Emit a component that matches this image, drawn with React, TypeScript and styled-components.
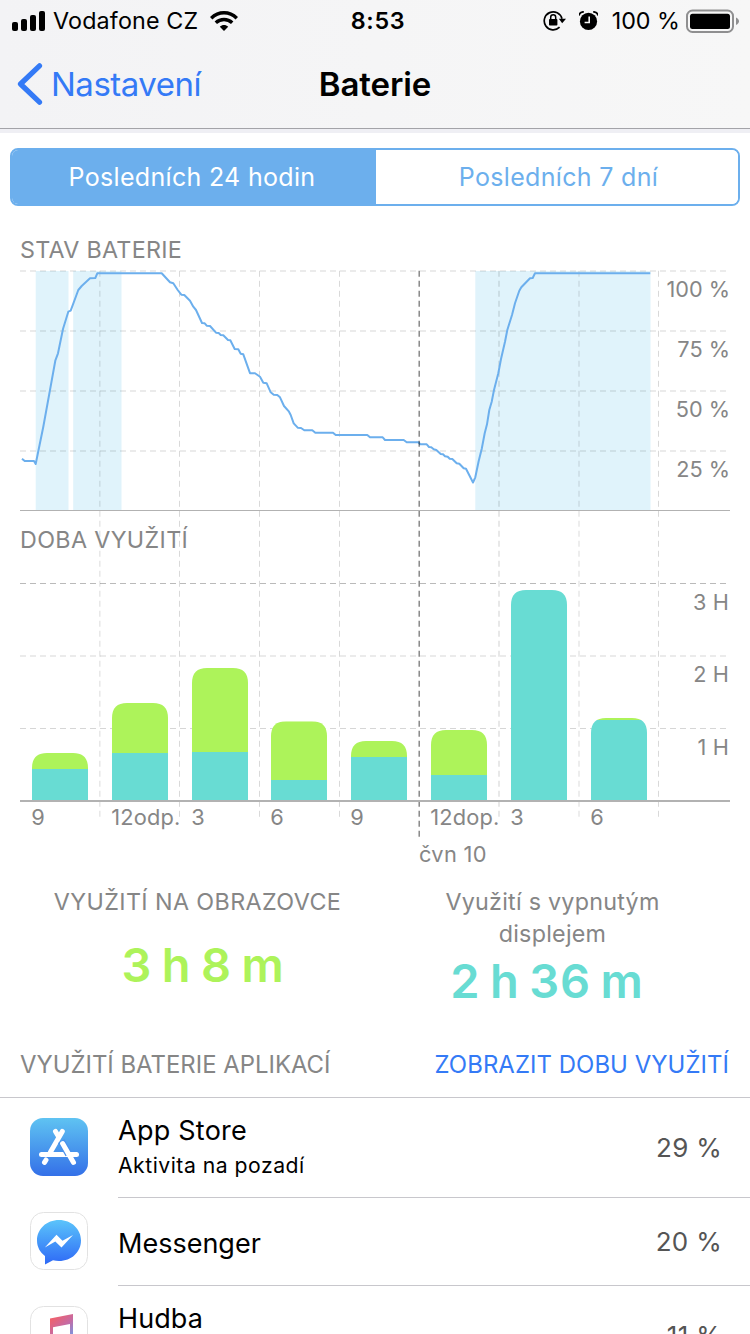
import React from 'react';
import styled, { createGlobalStyle } from 'styled-components';

const GlobalStyle = createGlobalStyle`
  *, *::before, *::after { box-sizing: border-box; }
  html, body { margin: 0; padding: 0; background: #fff; }
  body { font-family: Inter, 'Liberation Sans', sans-serif; color: #000; }
`;

const blue = '#347af6';
const sky = '#6cafed';
const gray = '#868686';
const green = '#adf35a';
const teal = '#68dcd3';

const Screen = styled.div`
  width: 750px;
  height: 1334px;
  overflow: hidden;
  background: #fff;
`;

const Header = styled.header`
  height: 129px;
  background: linear-gradient(90deg, #f3f3f5, #f7f7f7);
  border-bottom: 1px solid #a3a3a8;
`;

const HeaderShade = styled.div`
  height: 4px;
  background: #efeff4;
`;

const StatusBar = styled.div`
  display: grid;
  grid-template-columns: 1fr auto 1fr;
  align-items: center;
  height: 40px;
  padding: 0 11px 0 12px;
`;

const StatusGroup = styled.div<{ $end?: boolean }>`
  display: flex;
  align-items: center;
  justify-content: ${(p) => (p.$end ? 'flex-end' : 'flex-start')};
  height: 40px;
`;

const StatusText = styled.span<{ $track?: number; $margin?: string }>`
  margin: ${(p) => p.$margin ?? '0'};
  padding-top: 1px;
  font-size: 23.3px;
  line-height: 40px;
  letter-spacing: ${(p) => p.$track ?? 0}px;
  white-space: nowrap;
`;

const Clock = styled(StatusText)`
  font-weight: 600;
  padding-left: 5px;
`;

const StatusIcon = styled.svg<{ $gap?: number }>`
  flex: none;
  margin-right: ${(p) => p.$gap ?? 0}px;
`;

const NavBar = styled.nav`
  display: grid;
  grid-template-columns: 1fr auto 1fr;
  align-items: center;
  height: 88px;
  padding: 0 17px;
`;

const BackButton = styled.button`
  display: flex;
  align-items: center;
  gap: 8px;
  border: 0;
  padding: 0;
  background: none;
  color: ${blue};
  font: 400 33px/40px Inter, sans-serif;
  letter-spacing: -0.5px;
`;

const NavTitle = styled.h1`
  margin: 0;
  font-size: 33px;
  line-height: 40px;
  font-weight: 600;
  letter-spacing: -0.1px;
`;

const Segmented = styled.div`
  display: flex;
  height: 58px;
  margin: 15px 10px 0;
  border: 2px solid ${sky};
  border-radius: 8px;
  overflow: hidden;
`;

const Segment = styled.button<{ $active?: boolean }>`
  flex: ${(p) => (p.$active ? '0 0 364px' : '1')};
  border: 0;
  padding: ${(p) => (p.$active ? '0 4px 0 0' : '0 0 0 3px')};
  background: ${(p) => (p.$active ? sky : '#fff')};
  color: ${(p) => (p.$active ? '#fff' : sky)};
  font: 400 25px/54px Inter, sans-serif;
  letter-spacing: 0.32px;
`;

const SectionTitle = styled.h2`
  margin: 29px 0 0;
  padding-left: 20px;
  height: 35px;
  font-size: 23.3px;
  line-height: 30px;
  font-weight: 400;
  color: ${gray};
  letter-spacing: 0.27px;
`;

const Chart = styled.svg`
  display: block;
  text {
    font-family: Inter, sans-serif;
    fill: ${gray};
  }
`;

const Summary = styled.section`
  display: grid;
  grid-template-columns: 355px 355px;
  padding: 16px 0 0 20px;
  height: 162px;
  text-align: center;
`;

const SummaryLabel = styled.div<{ $track: number }>`
  font-size: 23.3px;
  line-height: 32px;
  color: ${gray};
  letter-spacing: ${(p) => p.$track}px;
`;

const SummaryValue = styled.div<{ $color: string; $gap: number; $shift: number }>`
  margin-top: ${(p) => p.$gap}px;
  padding-left: ${(p) => Math.max(p.$shift, 0)}px;
  padding-right: ${(p) => Math.max(-p.$shift, 0)}px;
  font-size: 47px;
  line-height: 56px;
  font-weight: 600;
  letter-spacing: 0.8px;
  word-spacing: -3px;
  color: ${(p) => p.$color};
`;

const ListHeader = styled.div`
  display: flex;
  justify-content: space-between;
  align-items: center;
  height: 66px;
  padding: 0 21px 0 20px;
  border-bottom: 1px solid #c8c7cc;
  font-size: 23.9px;
  line-height: 30px;
  color: ${gray};
`;

const ListLink = styled.a`
  color: ${blue};
  letter-spacing: 0.07px;
`;

const Row = styled.div<{ $height: number }>`
  display: flex;
  height: ${(p) => p.$height}px;
  padding-left: 30px;
`;

const AppIcon = styled.svg<{ $top: number }>`
  flex: none;
  width: 58px;
  height: 58px;
  margin: ${(p) => p.$top}px 30px 0 0;
`;

const RowBody = styled.div`
  flex: 1;
  display: flex;
  justify-content: space-between;
  border-bottom: 1px solid #c8c7cc;
  padding-right: 28px;
`;

const AppName = styled.div<{ $top: number; $track?: number }>`
  padding-top: ${(p) => p.$top}px;
  font-size: 27px;
  line-height: 36px;
  letter-spacing: ${(p) => p.$track ?? 0}px;
`;

const AppNote = styled.div`
  font-size: 21.2px;
  line-height: 32px;
  letter-spacing: 0.5px;
`;

const Percent = styled.div<{ $top: number }>`
  padding-top: ${(p) => p.$top}px;
  font-size: 26px;
  line-height: 36px;
  letter-spacing: 0.3px;
  color: #555;
`;

const levels =
  '22,458.7 24.7,461 34,461 35.7,464 43.3,426.7 50,390 55.3,360.7 58,353.3 63,329 68.3,311.7 70.7,310.7 78.3,290 81.7,286 90,278.3 95.3,278 97.3,273.3 161.7,273.3 170,282.3 173.3,283.3 177.7,290 181.3,294.7 184.3,295 190,300.7 193.3,306.7 196,310 202,323 204.7,323.3 206.7,325.7 210,326 216,332.7 218.7,333 220.7,335 223.3,335.3 228,340 230.3,340.3 234.7,349 238.3,349.3 240.7,353.7 243.3,354.3 250,373.2 255,373.2 260,376.7 263.3,382.7 266.7,383.3 270.7,392.3 273.7,394.7 277.3,395 280,397.3 284,406 289,411.7 290.7,415 293.7,423.3 297.7,427.7 301,428 304.3,430.3 312.3,430.3 315.3,432.7 333,432.7 335.7,435 367.3,435 370,437.3 382.7,437.3 385,440 403.7,440 406.7,442.3 418.3,442.3 420.3,444.3 426.7,444.3 429,447 431.3,447.3 433.7,449.3 436.3,450 440.7,454 443,454.3 445,456.3 447.7,456.7 449.7,458.7 452.3,459 456.7,463.3 459.3,463.7 463.7,468.3 466,468.7 473,482.5 475.3,477.3 478.7,461 481.7,449 484.7,433.3 487,424.3 489.3,410 491.7,401.7 494,390 498.3,373.3 501,359 505,341.7 507.3,330 512,315 515,303.3 519.3,290.7 521.3,287.3 530,278.3 532.7,278 535,273.3 650.3,273.3';

const columns = [
  { x: 99.8, w: 1.6 },
  { x: 179.5, w: 1 },
  { x: 259.5, w: 1 },
  { x: 339.5, w: 1 },
  { x: 499, w: 2 },
  { x: 579, w: 1.6 },
  { x: 658.5, w: 1 },
];

const bars = [
  { x: 32, top: 753, split: 769, label: '9' },
  { x: 112, top: 703, split: 753, label: '12odp.' },
  { x: 192, top: 668, split: 752, label: '3' },
  { x: 271, top: 721.3, split: 780, label: '6' },
  { x: 351, top: 741, split: 757, label: '9' },
  { x: 431, top: 730, split: 775, label: '12dop.' },
  { x: 511, top: 590, split: 590, label: '3' },
  { x: 591, top: 718, split: 720, label: '6' },
];

function barPath(x: number, top: number) {
  const r = 15;
  return `M${x} 800V${top + r}C${x} ${top + 5} ${x + 5} ${top} ${x + r} ${top}H${x + 56 - r}C${x + 51} ${top} ${x + 56} ${top + 5} ${x + 56} ${top + r}V800Z`;
}

function BatteryCharts() {
  return (
    <Chart width="750" height="600" viewBox="0 270 750 600">
      <g fill="#e0f3fb">
        <rect x="35.7" y="271" width="32.8" height="239" />
        <rect x="73.2" y="271" width="48.3" height="239" />
        <rect x="475.3" y="271" width="175.2" height="239" />
      </g>
      <g stroke="#000" strokeDasharray="6 4">
        {[271, 331, 391, 451, 656].map((y) => (
          <line key={y} x1="20" x2="728" y1={y} y2={y} strokeWidth="2" strokeOpacity="0.08" />
        ))}
        <line x1="20" x2="728" y1="583.5" y2="583.5" strokeOpacity="0.27" />
        <line x1="20" x2="728" y1="728.5" y2="728.5" strokeOpacity="0.16" />
        {columns.map((c) => (
          <line key={c.x} x1={c.x} x2={c.x} y1="270.8" y2="817" strokeWidth={c.w} strokeOpacity={c.w > 1 ? 0.09 : 0.15} />
        ))}
      </g>
      <polyline points={levels} fill="none" stroke={sky} strokeWidth="2" strokeLinejoin="round" />
      <line x1="419.2" x2="419.2" y1="270.8" y2="837" stroke="#000" strokeOpacity="0.5" strokeWidth="1.4" strokeDasharray="6 4" />
      <rect x="20" y="510" width="710" height="1" fill="#b2b2b2" />
      {bars.map((b, i) => (
        <g key={b.x}>
          <clipPath id={`bar-${i}`}>
            <path d={barPath(b.x, b.top)} />
          </clipPath>
          <g clipPath={`url(#bar-${i})`}>
            <rect x={b.x} y={b.top} width="56" height={b.split - b.top} fill={green} />
            <rect x={b.x} y={b.split} width="56" height={800 - b.split} fill={teal} />
          </g>
        </g>
      ))}
      <rect x="20" y="800" width="710" height="2" fill="#b2b2b2" />
      <text x="20" y="548" fontSize="23.3" letterSpacing="0.35">DOBA VYUŽITÍ</text>
      <g fontSize="21.7" textAnchor="end">
        <text x="730" y="297">100 %</text>
        <text x="730" y="357">75 %</text>
        <text x="730" y="417">50 %</text>
        <text x="730" y="477">25 %</text>
        <g letterSpacing="0.2">
          <text x="729.2" y="610">3 H</text>
          <text x="729.2" y="682">2 H</text>
          <text x="729.2" y="754.5">1 H</text>
        </g>
      </g>
      <g fontSize="21.8" letterSpacing="0.15">
        {bars.map((b) => (
          <text key={b.x} x={b.x - 0.7} y="825">{b.label}</text>
        ))}
        <text x="419" y="862" letterSpacing="0.3">čvn 10</text>
      </g>
    </Chart>
  );
}

function SignalIcon() {
  return (
    <StatusIcon width="34" height="20" viewBox="0 0 34 20">
      <rect x="0" y="11" width="6" height="9" rx="2" />
      <rect x="9" y="8" width="6" height="12" rx="2" />
      <rect x="18" y="4" width="6" height="16" rx="2" />
      <rect x="27" y="0" width="6" height="20" rx="2" />
    </StatusIcon>
  );
}

function WifiIcon() {
  return (
    <StatusIcon width="28" height="20" viewBox="0 0 28 20">
      <g fill="none" stroke="#000" strokeWidth="3.5">
        <path d="M1.2 7.2C8.6 0 19.4 0 26.8 7.2" />
        <path d="M5.8 11.7C10.5 7.3 17.5 7.3 22.2 11.7" />
      </g>
      <path d="M9.8 15.8C12.2 13.5 15.8 13.5 18.2 15.8L14 20Z" />
    </StatusIcon>
  );
}

function LockIcon() {
  return (
    <StatusIcon $gap={13} width="23" height="22" viewBox="0 0 23 22">
      <path d="M16.6 17.2A9 9 0 1 1 19 8.7" fill="none" stroke="#000" strokeWidth="1.7" />
      <path d="M15.8 8.8H23L19.2 13.3Z" />
      <rect x="6" y="9.1" width="8.4" height="6.4" rx="0.8" />
      <path d="M7.7 9.5V7.2a2.5 2.5 0 0 1 5 0V9.5" fill="none" stroke="#000" strokeWidth="1.5" />
    </StatusIcon>
  );
}

function AlarmIcon() {
  return (
    <StatusIcon width="19" height="20" viewBox="0 0 19 20">
      <circle cx="9.5" cy="10.4" r="8.6" />
      <path d="M0 4.6C0.4 2 2 0.8 4.8 0.8M19 4.6C18.6 2 17 0.8 14.2 0.8" fill="none" stroke="#000" strokeWidth="1.7" />
      <path d="M10.2 5.4V11.5H5.6" fill="none" stroke="#f6f6f6" strokeWidth="1.6" />
    </StatusIcon>
  );
}

function BatteryIcon() {
  return (
    <StatusIcon width="53" height="24" viewBox="0 0 53 24">
      <rect x="1" y="1.5" width="46" height="21.5" rx="5.5" fill="none" stroke="#8f8f90" strokeWidth="2" />
      <rect x="4" y="4.7" width="40" height="15.3" rx="2.5" />
      <path d="M50 8.5C54 10.3 54 14.2 50 16Z" fill="#8f8f90" />
    </StatusIcon>
  );
}

function AppStoreIcon() {
  return (
    <AppIcon $top={20} viewBox="0 0 58 58">
      <defs>
        <linearGradient id="store" x2="0" y2="1">
          <stop stopColor="#5fc3f2" />
          <stop offset="1" stopColor="#3470e8" />
        </linearGradient>
      </defs>
      <rect width="58" height="58" rx="13" fill="url(#store)" />
      <g fill="none" stroke="#fff" strokeWidth="5" strokeLinecap="round">
        <path d="M32.3 13.4L20.5 34" />
        <path d="M25.5 13.4L28.5 18.5" />
        <path d="M16 42L14.5 44.4" />
        <path d="M11.5 36.5H46.5" />
      </g>
      <path d="M31.2 23.2L38.8 36.3" stroke="#4890ec" strokeWidth="7.4" />
      <path d="M38.9 36.5H46.5" stroke="#fff" strokeWidth="5" />
      <path d="M32.6 25.6L43.5 44.4" stroke="#fff" strokeWidth="5" strokeLinecap="round" />
    </AppIcon>
  );
}

function MessengerIcon() {
  return (
    <AppIcon $top={14} viewBox="0 0 58 58">
      <defs>
        <linearGradient id="messenger" x2="0" y2="1">
          <stop stopColor="#5bc4fb" />
          <stop offset="1" stopColor="#2e69f6" />
        </linearGradient>
      </defs>
      <rect x="0.5" y="0.5" width="57" height="57" rx="13" fill="#fff" stroke="#e2e2e2" />
      <path d="M29 8C16.5 8 7 17 7 28.5C7 35 10.2 40.5 15 44V52.5L23 48.3C25 48.8 27 49 29 49C41.5 49 51 40 51 28.5S41.5 8 29 8Z" fill="url(#messenger)" />
      <path d="M14.8 35.5L26.5 22.7L32.5 28.7L43 23L31.5 35.5L25.3 29.5Z" fill="#fff" />
    </AppIcon>
  );
}

function MusicIcon() {
  return (
    <AppIcon $top={20} viewBox="0 0 58 58">
      <defs>
        <linearGradient id="music" gradientUnits="userSpaceOnUse" x1="24" y1="10" x2="42" y2="32">
          <stop stopColor="#f2606a" />
          <stop offset="0.5" stopColor="#c56ba4" />
          <stop offset="1" stopColor="#6f9be8" />
        </linearGradient>
      </defs>
      <rect x="0.5" y="0.5" width="57" height="57" rx="13" fill="#fff" stroke="#e2e2e2" />
      <path d="M20 12.5L43 8V40H40V18L23 21.3V44H20Z" fill="url(#music)" />
    </AppIcon>
  );
}

export default function App() {
  return (
    <Screen>
      <GlobalStyle />
      <Header>
        <StatusBar>
          <StatusGroup>
            <SignalIcon />
            <StatusText $margin="0 12px 0 7px" $track={0.15}>Vodafone CZ</StatusText>
            <WifiIcon />
          </StatusGroup>
          <Clock $track={0.7}>8:53</Clock>
          <StatusGroup $end>
            <LockIcon />
            <AlarmIcon />
            <StatusText $margin="0 6px 0 14px">100 %</StatusText>
            <BatteryIcon />
          </StatusGroup>
        </StatusBar>
        <NavBar>
          <BackButton>
            <svg width="26" height="42" viewBox="0 0 26 42">
              <path d="M22.5 2.8L3.5 21L22.5 39.2" fill="none" stroke={blue} strokeWidth="5.2" strokeLinecap="round" strokeLinejoin="round" />
            </svg>
            Nastavení
          </BackButton>
          <NavTitle>Baterie</NavTitle>
        </NavBar>
      </Header>
      <HeaderShade />
      <Segmented>
        <Segment $active>Posledních 24 hodin</Segment>
        <Segment>Posledních 7 dní</Segment>
      </Segmented>
      <SectionTitle>STAV BATERIE</SectionTitle>
      <BatteryCharts />
      <Summary>
        <div>
          <SummaryLabel $track={0.4}>VYUŽITÍ NA OBRAZOVCE</SummaryLabel>
          <SummaryValue $color={green} $gap={19} $shift={11}>3 h 8 m</SummaryValue>
        </div>
        <div>
          <SummaryLabel $track={0.25}>Využití s vypnutým<br />displejem</SummaryLabel>
          <SummaryValue $color={teal} $gap={3} $shift={-11}>2 h 36 m</SummaryValue>
        </div>
      </Summary>
      <ListHeader>
        <span>VYUŽITÍ BATERIE APLIKACÍ</span>
        <ListLink>ZOBRAZIT DOBU VYUŽITÍ</ListLink>
      </ListHeader>
      <Row $height={100}>
        <AppStoreIcon />
        <RowBody>
          <div>
            <AppName $top={15} $track={0.25}>App Store</AppName>
            <AppNote>Aktivita na pozadí</AppNote>
          </div>
          <Percent $top={32}>29 %</Percent>
        </RowBody>
      </Row>
      <Row $height={88}>
        <MessengerIcon />
        <RowBody>
          <AppName $top={28}>Messenger</AppName>
          <Percent $top={26}>20 %</Percent>
        </RowBody>
      </Row>
      <Row $height={100}>
        <MusicIcon />
        <RowBody>
          <AppName $top={15} $track={0.1}>Hudba</AppName>
          <Percent $top={32}>11 %</Percent>
        </RowBody>
      </Row>
    </Screen>
  );
}
